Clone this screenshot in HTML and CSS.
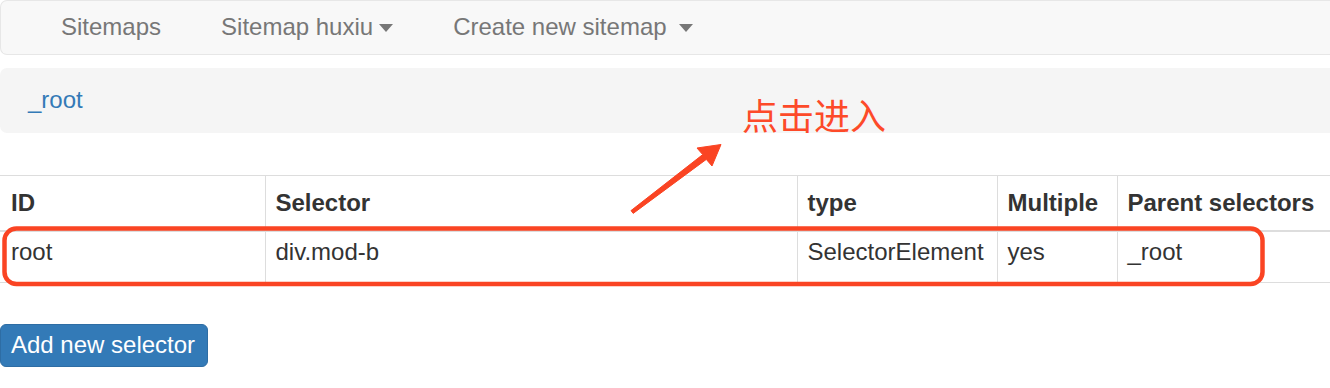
FILE: index.html
```html
<!DOCTYPE html>
<html lang="en">
<head>
<meta charset="utf-8">
<title>Sitemap huxiu</title>
<link rel="stylesheet" href="styles.css">
</head>
<body>
<div class="page">
  <nav class="navbar">
    <a class="nav-link" href="#">Sitemaps</a>
    <a class="nav-link" href="#">Sitemap huxiu<span class="caret"></span></a>
    <a class="nav-link" href="#">Create new sitemap<span class="caret caret-spaced"></span></a>
  </nav>

  <div class="breadcrumb"><a class="crumb" href="#">_root</a></div>

  <table class="selectors">
    <colgroup>
      <col class="c-id">
      <col class="c-sel">
      <col class="c-type">
      <col class="c-mult">
      <col>
    </colgroup>
    <thead>
      <tr>
        <th>ID</th>
        <th>Selector</th>
        <th>type</th>
        <th>Multiple</th>
        <th>Parent selectors</th>
      </tr>
    </thead>
    <tbody>
      <tr>
        <td>root</td>
        <td>div.mod-b</td>
        <td>SelectorElement</td>
        <td>yes</td>
        <td>_root</td>
      </tr>
    </tbody>
  </table>

  <button class="btn-primary" type="button">Add new selector</button>

  <svg class="overlay" width="1330" height="388" viewBox="0 0 1330 388" aria-hidden="true">
    <rect x="4.5" y="228.5" width="1258" height="55.5" rx="12" ry="12" fill="none" stroke="#fa4423" stroke-width="4.5"/>
    <polygon points="631,210.6 702.7,154.6 697,148 721,144.5 712,166 706.3,159.4 633.2,213.4" fill="#fa4423" stroke="#fa4423" stroke-width="1" stroke-linejoin="round"/>
  </svg>
  <div class="note">点击进入</div>
</div>
</body>
</html>
```

FILE: styles.css
```css
html, body {
  margin: 0;
  padding: 0;
  background: #fff;
}

body {
  font-family: "Liberation Sans", Arial, Helvetica, sans-serif;
  font-size: 24px;
  line-height: 34px;
  color: #333;
  overflow: hidden;
}

.page {
  position: relative;
  width: 1330px;
  height: 388px;
}

a {
  text-decoration: none;
}

.navbar {
  display: flex;
  align-items: center;
  height: 53px;
  padding-left: 30px;
  background: #f8f8f8;
  border: 1px solid #e7e7e7;
  border-right: 0;
  border-radius: 7px 0 0 7px;
}

.nav-link {
  display: flex;
  align-items: center;
  padding: 9px 30px 10px;
  color: #777;
}

.caret {
  display: inline-block;
  width: 0;
  height: 0;
  margin-left: 6px;
  margin-top: 2px;
  border-top: 8px solid #777;
  border-left: 7.5px solid transparent;
  border-right: 7.5px solid transparent;
}

.caret-spaced {
  margin-left: 12px;
}

.breadcrumb {
  margin-top: 13px;
  height: 34px;
  padding: 15px 28px 16px;
  background: #f5f5f5;
  border-radius: 7px 0 0 7px;
}

.crumb {
  color: #337ab7;
}

.selectors {
  margin-top: 42px;
  width: 100%;
  border-collapse: collapse;
  table-layout: fixed;
  border-top: 1px solid #ddd;
}

.c-id { width: 265px; }
.c-sel { width: 532px; }
.c-type { width: 200px; }
.c-mult { width: 120px; }

.selectors th,
.selectors td {
  text-align: left;
  padding-left: 10px;
  padding-right: 8px;
  border-left: 1px solid #ddd;
  white-space: nowrap;
  overflow: hidden;
}

.selectors th:first-child,
.selectors td:first-child {
  border-left: 0;
  padding-left: 11px;
}

.selectors th {
  font-weight: bold;
  height: 34px;
  padding-top: 10px;
  padding-bottom: 10px;
  border-bottom: 2px solid #ddd;
}

.selectors td {
  height: 34px;
  padding-top: 3px;
  padding-bottom: 13px;
  border-bottom: 1px solid #ddd;
}

.btn-primary {
  display: block;
  margin-top: 41px;
  padding: 3px 12px 4px 10px;
  font-family: inherit;
  font-size: 24px;
  line-height: 34px;
  color: #fff;
  background: #337ab7;
  border: 1px solid #2e6da4;
  border-radius: 6px;
}

.overlay {
  position: absolute;
  left: 0;
  top: 0;
  pointer-events: none;
}

.note {
  position: absolute;
  left: 742px;
  top: 96px;
  font-family: "Noto Sans CJK SC", sans-serif;
  font-size: 36px;
  line-height: 36px;
  color: #fd4a29;
  white-space: nowrap;
}
```
